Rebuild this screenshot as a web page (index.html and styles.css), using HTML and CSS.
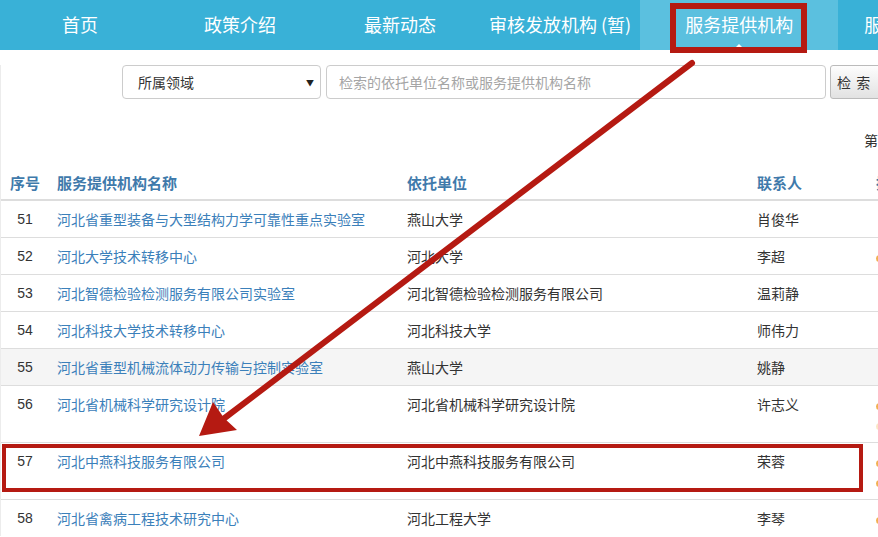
FILE: index.html
```html
<!DOCTYPE html>
<html lang="zh-CN">
<head>
<meta charset="utf-8">
<title>服务提供机构</title>
<link rel="stylesheet" href="styles.css">
</head>
<body>
<div class="page">
  <nav class="nav">
    <a class="nav-item">首页</a>
    <a class="nav-item">政策介绍</a>
    <a class="nav-item">最新动态</a>
    <a class="nav-item">审核发放机构 (暂)</a>
    <a class="nav-item active">服务提供机构</a>
    <a class="nav-item">服务申请指南</a>
  </nav>
  <div class="content">
    <div class="search">
      <div class="select"><span>所属领域</span><span class="caret">▼</span></div>
      <div class="input">检索的依托单位名称或服务提供机构名称</div>
      <div class="btn">检 索</div>
    </div>
    <div class="pager">第 6 页 共 12 页</div>
    <table class="list">
      <colgroup>
        <col class="c1"><col class="c2"><col class="c3"><col class="c4"><col class="c5">
      </colgroup>
      <thead>
        <tr><th class="num">序号</th><th>服务提供机构名称</th><th>依托单位</th><th>联系人</th><th>操作</th></tr>
      </thead>
      <tbody>
        <tr><td class="num">51</td><td><a>河北省重型装备与大型结构力学可靠性重点实验室</a></td><td>燕山大学</td><td>肖俊华</td><td></td></tr>
        <tr><td class="num">52</td><td><a>河北大学技术转移中心</a></td><td>河北大学</td><td>李超</td><td><i class="dot"></i></td></tr>
        <tr><td class="num">53</td><td><a>河北智德检验检测服务有限公司实验室</a></td><td>河北智德检验检测服务有限公司</td><td>温莉静</td><td></td></tr>
        <tr><td class="num">54</td><td><a>河北科技大学技术转移中心</a></td><td>河北科技大学</td><td>师伟力</td><td></td></tr>
        <tr class="hover"><td class="num">55</td><td><a>河北省重型机械流体动力传输与控制实验室</a></td><td>燕山大学</td><td>姚静</td><td></td></tr>
        <tr><td class="num">56</td><td><a>河北省机械科学研究设计院</a></td><td>河北省机械科学研究设计院</td><td>许志义</td><td><i class="dot"></i><br><i class="dot faint"></i></td></tr>
        <tr><td class="num">57</td><td><a>河北中燕科技服务有限公司</a></td><td>河北中燕科技服务有限公司</td><td>荣蓉</td><td><i class="dot"></i><br><i class="dot"></i></td></tr>
        <tr><td class="num">58</td><td><a>河北省禽病工程技术研究中心</a></td><td>河北工程大学</td><td>李琴</td><td><i class="dot"></i></td></tr>
      </tbody>
    </table>
  </div>
  <svg class="marks" width="878" height="537" viewBox="0 0 878 537">
    <rect x="673" y="6" width="131" height="44" fill="none" stroke="#b51a12" stroke-width="6"/>
    <rect x="4" y="446" width="857" height="44" fill="none" stroke="#b51a12" stroke-width="4"/>
    <line x1="692" y1="63" x2="222" y2="420" stroke="#b51a12" stroke-width="6" stroke-linecap="round"/>
    <polygon points="199,436 213,402 224,418 237,430" fill="#b51a12"/>
  </svg>
</div>
</body>
</html>
```
FILE: styles.css
```css
html, body {
  margin: 0;
  padding: 0;
  background: #fff;
  overflow: hidden;
}
.page {
  position: relative;
  width: 1000px;
  font-family: "Noto Sans CJK SC", "Liberation Sans", sans-serif;
  color: #333;
}
.nav {
  display: flex;
  height: 50px;
  background: #39b1d7;
}
.nav-item {
  min-width: 160px;
  box-sizing: border-box;
  padding: 0 9px;
  text-align: center;
  line-height: 49px;
  font-size: 18px;
  color: #fff;
  white-space: nowrap;
  position: relative;
}
.nav-item.active {
  min-width: 0;
  padding: 0 45px;
  background: #5bc0df;
}
.nav-item.active::after {
  content: "";
  position: absolute;
  left: 50%;
  bottom: 0;
  margin-left: -6px;
  border-left: 6px solid transparent;
  border-right: 6px solid transparent;
  border-bottom: 6px solid #fff;
}
.content {
  border-left: 1px solid #ececec;
}
.search {
  display: flex;
  align-items: stretch;
  height: 34px;
  margin-top: 15px;
  padding-left: 121px;
  font-size: 14px;
}
.select {
  width: 199px;
  box-sizing: border-box;
  display: flex;
  justify-content: space-between;
  align-items: center;
  padding: 0 6px 0 15px;
  border: 1px solid #ccc;
  border-radius: 4px;
  color: #333;
}
.caret {
  font-size: 8px;
  color: #222;
}
.input {
  width: 500px;
  box-sizing: border-box;
  margin-left: 5px;
  display: flex;
  align-items: center;
  padding-left: 12px;
  border: 1px solid #ccc;
  border-radius: 4px;
  color: #a5a5a5;
}
.btn {
  width: 60px;
  box-sizing: border-box;
  margin-left: 4px;
  display: flex;
  align-items: center;
  padding-left: 6px;
  border: 1px solid #bbb;
  border-radius: 3px;
  background: linear-gradient(#fdfdfd, #e2e2e2);
  color: #333;
  letter-spacing: 1px;
}
.pager {
  margin-top: 31px;
  padding-left: 863px;
  line-height: 20px;
  font-size: 14px;
  white-space: nowrap;
}
.list {
  margin-top: 15px;
  width: 1000px;
  table-layout: fixed;
  border-collapse: collapse;
  font-size: 14px;
}
.c1 { width: 48px; }
.c2 { width: 350px; }
.c3 { width: 350px; }
.c4 { width: 119px; }
.c5 { width: 133px; }
.list th {
  text-align: left;
  padding: 8px 8px 6px;
  line-height: 20px;
  font-size: 15px;
  font-weight: bold;
  color: #3f7aab;
  border-bottom: 2px solid #ddd;
  white-space: nowrap;
}
.list td {
  padding: 8px;
  line-height: 20px;
  border-top: 1px solid #ddd;
  vertical-align: top;
  white-space: nowrap;
}
.list .num {
  text-align: center;
  font-family: "Liberation Sans", sans-serif;
  padding-left: 6px;
  padding-right: 6px;
}
.list th.num {
  font-family: "Noto Sans CJK SC", sans-serif;
}
.list a {
  color: #3b80ba;
}
.list tr.hover td {
  background: #f5f5f5;
}
.dot {
  display: inline-block;
  width: 7px;
  height: 7px;
  border-radius: 50%;
  background: #f2b050;
  vertical-align: middle;
}
.dot.faint {
  background: #fbe6c4;
}
.marks {
  position: absolute;
  left: 0;
  top: 0;
  pointer-events: none;
}
```
